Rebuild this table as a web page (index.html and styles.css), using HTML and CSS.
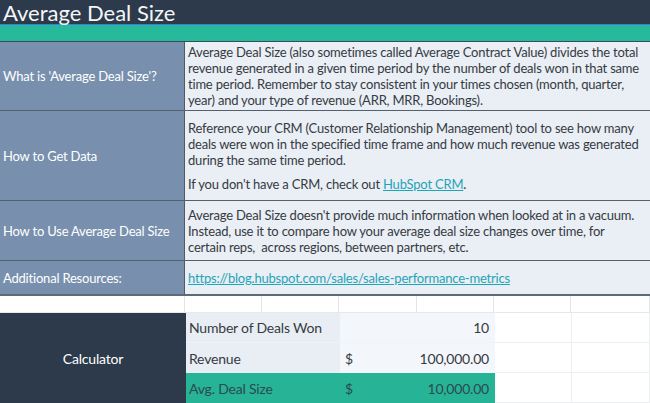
FILE: index.html
```html
<!DOCTYPE html>
<html>
<head>
<meta charset="utf-8">
<link rel="stylesheet" href="styles.css">
</head>
<body>
<div class="sheet">
  <div class="title">Average Deal Size</div>
  <div class="band"></div>
  <div class="row r1">
    <div class="label">What is 'Average Deal Size'?</div>
    <div class="text"><p>Average Deal Size (also sometimes called Average Contract Value) divides the total revenue generated in a given time period by the number of deals won in that same time period. Remember to stay consistent in your times chosen (month, quarter, year) and your type of revenue (ARR, MRR, Bookings).</p></div>
  </div>
  <div class="row r2">
    <div class="label">How to Get Data</div>
    <div class="text"><p>Reference your CRM (Customer Relationship Management) tool to see how many deals were won in the specified time frame and how much revenue was generated during the same time period.</p><p class="gap">If you don't have a CRM, check out <a href="#">HubSpot CRM</a>.</p></div>
  </div>
  <div class="row r3">
    <div class="label">How to Use Average Deal Size</div>
    <div class="text"><p>Average Deal Size doesn't provide much information when looked at in a vacuum. Instead, use it to compare how your average deal size changes over time, for certain reps,&nbsp; across regions, between partners, etc.</p></div>
  </div>
  <div class="row r4">
    <div class="label">Additional Resources:</div>
    <div class="text"><p><a href="#">https://blog.hubspot.com/sales/sales-performance-metrics</a></p></div>
  </div>
  <div class="blank">
    <div class="c"></div><div class="c"></div><div class="c"></div><div class="c"></div><div class="c"></div><div class="c"></div><div class="c"></div>
  </div>
  <div class="calc">
    <div class="calc-title">Calculator</div>
    <div class="calc-rows">
      <div class="crow">
        <div class="cl">Number of Deals Won</div>
        <div class="cv"><span></span><span>10</span></div>
        <div class="ce"></div><div class="ce"></div>
      </div>
      <div class="crow">
        <div class="cl">Revenue</div>
        <div class="cv"><span>$</span><span>100,000.00</span></div>
        <div class="ce"></div><div class="ce"></div>
      </div>
      <div class="crow total">
        <div class="cl">Avg. Deal Size</div>
        <div class="cv"><span>$</span><span>10,000.00</span></div>
        <div class="ce"></div><div class="ce"></div>
      </div>
    </div>
  </div>
</div>
</body>
</html>
```

FILE: styles.css
```css
html, body {
  margin: 0;
  padding: 0;
  background: #ffffff;
}
.sheet {
  width: 650px;
  font-family: Lato, "Open Sans", sans-serif;
  font-size: 13px;
  letter-spacing: -0.2px;
  color: #353b42;
}
.title {
  height: 24px;
  background: #2c3a4b;
  color: #f4f6f8;
  font-size: 22px;
  letter-spacing: 0;
  line-height: 25px;
  padding-left: 3px;
  border-bottom: 1px solid #3d7fd6;
}
.band {
  height: 16px;
  background: #26b99b;
  border-bottom: 1px solid #3f4a57;
}
.row {
  display: grid;
  grid-template-columns: 185px 1fr;
  border-bottom: 1px solid #55606d;
}
.label {
  background: #7890ad;
  color: #ffffff;
  border-right: 1px solid #4e5a68;
  display: flex;
  align-items: center;
  padding-left: 3px;
}
.text {
  background: #eaeef5;
  display: flex;
  flex-direction: column;
  justify-content: center;
  padding: 0 9px 0 3px;
  line-height: 16px;
}
.text p {
  margin: 0;
}
.text p.gap {
  margin-top: 8px;
}
.text a {
  color: #1ea5b8;
  text-decoration: underline;
}
.r1 { height: 68px; }
.r2 { height: 89px; }
.r3 { height: 59px; }
.r4 { height: 33px; border-bottom: 2px solid #5f6a78; }
.blank {
  display: grid;
  grid-template-columns: 185px 77px 77px 78px 77px 77px 1fr;
  height: 16px;
  border-bottom: 1px solid #e6e8eb;
}
.blank .c {
  border-right: 1px solid #e3e5e8;
}
.calc {
  display: grid;
  grid-template-columns: 186px 1fr;
  height: 90px;
}
.calc-title {
  background: #2c3a4b;
  color: #ffffff;
  font-size: 14px;
  display: flex;
  align-items: center;
  justify-content: center;
}
.calc-rows {
  display: grid;
  grid-template-rows: 30px 30px 30px;
}
.crow {
  display: grid;
  grid-template-columns: 154px 155px 77px 1fr;
  font-size: 14px;
}
.cl {
  background: #e9eef5;
  display: flex;
  align-items: center;
  padding-left: 3px;
}
.cv {
  background: #f3f6fa;
  display: flex;
  align-items: center;
  justify-content: space-between;
  padding: 0 6px 0 5px;
}
.ce {
  border-right: 1px solid #eceef0;
  border-bottom: 1px solid #eceef0;
}
.crow:first-child .cl,
.crow:first-child .cv {
  border-bottom: 1px solid #f0f3f7;
}
.crow.total .cl,
.crow.total .cv {
  background: #27b496;
  color: #2b4a50;
}
```
